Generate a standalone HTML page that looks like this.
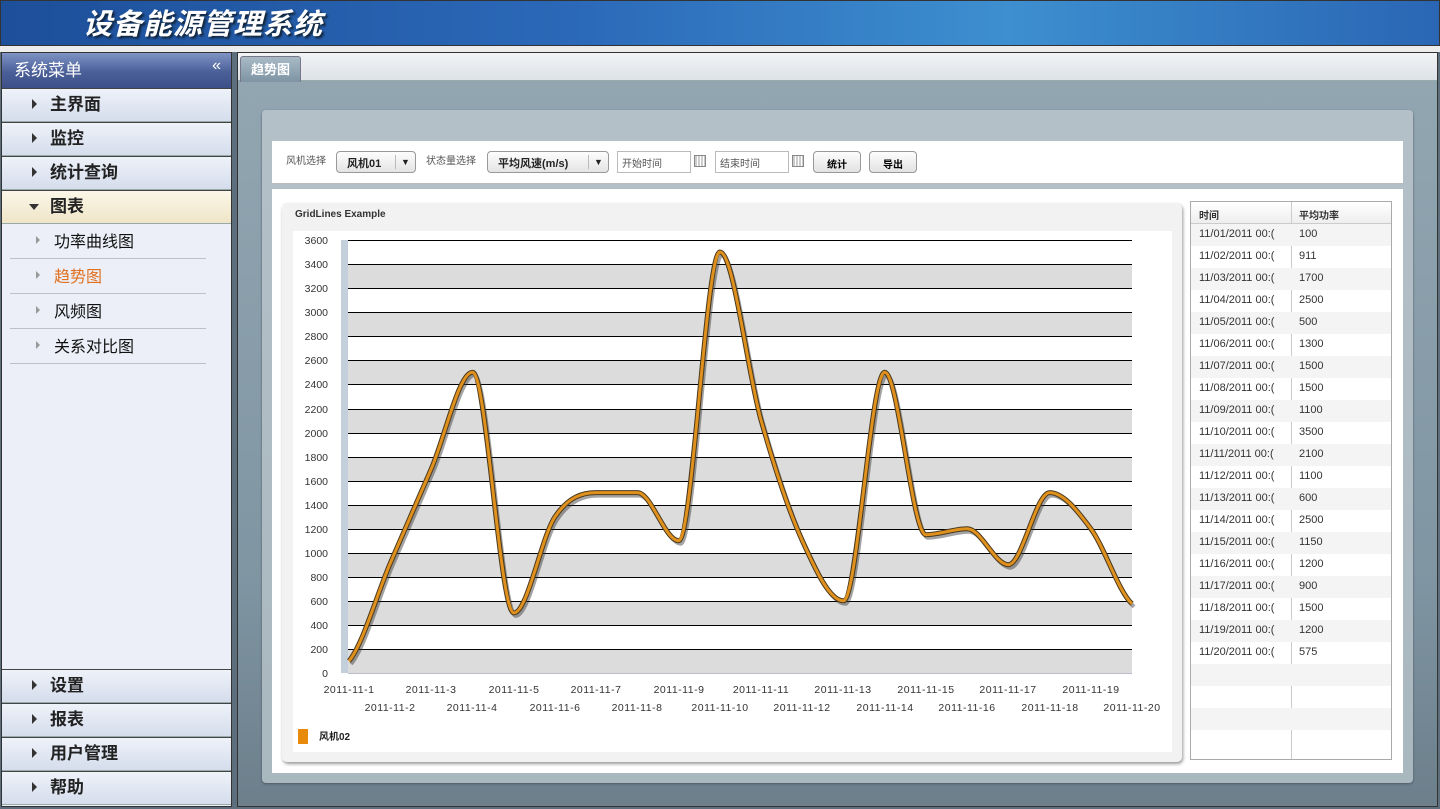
<!DOCTYPE html>
<html><head><meta charset="utf-8"><style>
*{margin:0;padding:0;box-sizing:border-box}
body{width:1440px;height:809px;position:relative;overflow:hidden;background:#5d6f7c;font-family:"Liberation Sans","Noto Sans CJK SC",sans-serif}
.a{position:absolute}
#hdr{left:0;top:0;width:1440px;height:46px;background:linear-gradient(90deg,#1d4f9a 0%,#2b69b8 40%,#3d8fd0 70%,#2a66b4 100%);border:1px solid #333}
#hdr span{position:absolute;left:82px;top:0px;font-size:29px;font-weight:bold;font-style:italic;color:#fff;text-shadow:2px 2px 2px #123;letter-spacing:1px}
#strip{left:0;top:46px;width:1440px;height:6px;background:#ececec}
#side{left:1px;top:52px;width:231px;height:755px;background:#eceff7;border:1px solid #333}
.sh{left:0;top:0;width:229px;height:35px;background:linear-gradient(#7f93c4,#4a5f98 55%,#3e5088);color:#fff;font-size:17px;padding:3px 0 0 12px}
.sh b{position:absolute;right:10px;top:4px;font-weight:normal;font-size:16px}
.mi{left:0;width:229px;height:34px;background:linear-gradient(#eef2f9,#d5ddec);border-top:1px solid #444;border-bottom:1px solid #9aa;font-size:17px;font-weight:bold;color:#222;padding:1px 0 0 48px}
.mi:before{content:"";position:absolute;left:30px;top:10px;border-left:5px solid #333;border-top:5px solid transparent;border-bottom:5px solid transparent}
.mi.on{background:linear-gradient(#fbf6e8,#efe5c8)}
.mi.on:before{left:27px;top:13px;border-top:6px solid #333;border-left:5px solid transparent;border-right:5px solid transparent;border-bottom:0}
.si{left:8px;width:196px;height:35px;border-bottom:1px solid #bcc1cc;font-size:16px;color:#111;padding:4px 0 0 44px}
.si:before{content:"";position:absolute;left:26px;top:12px;border-left:4px solid #999;border-top:4px solid transparent;border-bottom:4px solid transparent}
#main{left:237px;top:52px;width:1201px;height:755px;border:1px solid #333;background:linear-gradient(#93a7b2,#7f95a2 70%,#6c7f8b)}
#tabbar{left:0;top:0;width:1199px;height:28px;background:linear-gradient(#f2f4f6,#dde2e7);border-bottom:1px solid #9aa}
#tab{left:2px;top:3px;width:61px;height:26px;background:linear-gradient(#a9bac6,#7e94a3);border:1px solid #778;border-bottom:0;border-radius:3px 3px 0 0;color:#fff;font-weight:bold;font-size:13px;padding:2px 0 0 10px}
#panel{left:262px;top:110px;width:1151px;height:673px;background:linear-gradient(#b4c0c7,#a9b7bf);border-radius:4px;box-shadow:0 1px 2px #556}
#tool{left:272px;top:141px;width:1131px;height:43px;background:#fff;border-bottom:1px solid #bbb}
#cont{left:272px;top:189px;width:1131px;height:584px;background:#fff}
.lbl{font-size:10px;color:#555;top:154px}
.cb{top:151px;height:22px;border:1px solid #999;border-radius:4px;background:linear-gradient(#fdfdfd,#e4e4e4);font-size:11px;font-weight:bold;padding:3px 0 0 10px;color:#222}
.cb i{position:absolute;right:0;top:3px;width:20px;height:14px;border-left:1px solid #bbb;font-style:normal;font-size:9px;text-align:center;line-height:14px}
.tx{top:151px;width:74px;height:22px;border:1px solid #bbb;font-size:10px;color:#555;padding:3px 0 0 4px;background:#fff}
.cal{top:155px;width:12px;height:12px;border:1px solid #888;background:repeating-linear-gradient(90deg,#ccc 0 2px,#fff 2px 3px);}
.bt{top:151px;width:48px;height:22px;border:1px solid #999;border-radius:4px;background:linear-gradient(#fdfdfd,#e2e2e2);font-size:10px;font-weight:bold;text-align:center;padding-top:4px}
#card{left:282px;top:203px;width:900px;height:559px;background:#f2f2f2;border-radius:5px;box-shadow:1px 2px 3px #999}
#inner{left:293px;top:231px;width:879px;height:521px;background:#fff}
#tbl{left:1190px;top:201px;width:202px;height:559px;border:1px solid #aaa;background:#fff;font-size:11px;color:#333}
#tbl .r{position:absolute;left:0;width:200px;height:22px}
#tbl .r span{position:absolute;top:4px}
</style></head><body>
<div id="hdr" class="a"><span>设备能源管理系统</span></div>
<div id="strip" class="a"></div>
<div id="side" class="a">
<div class="a sh">系统菜单<b>«</b></div>
<div class="a mi" style="top:35px">主界面</div>
<div class="a mi" style="top:69px">监控</div>
<div class="a mi" style="top:103px">统计查询</div>
<div class="a mi on" style="top:137px">图表</div>
<div class="a si" style="top:171px">功率曲线图</div>
<div class="a si" style="top:206px;color:#e07020">趋势图</div>
<div class="a si" style="top:241px">风频图</div>
<div class="a si" style="top:276px">关系对比图</div>
<div class="a mi" style="top:616px">设置</div>
<div class="a mi" style="top:650px">报表</div>
<div class="a mi" style="top:684px">用户管理</div>
<div class="a mi" style="top:718px">帮助</div>
</div>
<div id="main" class="a"><div id="tabbar" class="a"></div><div id="tab" class="a">趋势图</div></div>
<div id="panel" class="a"></div>
<div id="tool" class="a"></div>
<div id="cont" class="a"></div>
<div class="a lbl" style="left:286px;top:152px">风机选择</div>
<div class="a cb" style="left:336px;width:80px">风机01<i>▼</i></div>
<div class="a lbl" style="left:426px;top:152px">状态量选择</div>
<div class="a cb" style="left:487px;width:122px">平均风速(m/s)<i>▼</i></div>
<div class="a tx" style="left:617px">开始时间</div><div class="a cal" style="left:694px"></div>
<div class="a tx" style="left:715px">结束时间</div><div class="a cal" style="left:792px"></div>
<div class="a bt" style="left:813px">统计</div>
<div class="a bt" style="left:869px">导出</div>
<div id="card" class="a"></div>
<div class="a" style="left:295px;top:209px;font-size:10px;font-weight:bold;color:#333">GridLines Example</div>
<div id="inner" class="a"></div>
<svg class="a" style="left:0;top:0" width="1440" height="809">
<g fill="#dcdcdc">
<rect x="348" y="649" width="784" height="24"/><rect x="348" y="601" width="784" height="24"/><rect x="348" y="553" width="784" height="24"/><rect x="348" y="505" width="784" height="24"/><rect x="348" y="457" width="784" height="24"/><rect x="348" y="409" width="784" height="24"/><rect x="348" y="360" width="784" height="24"/><rect x="348" y="312" width="784" height="24"/><rect x="348" y="264" width="784" height="24"/>
</g>
<rect x="341" y="240" width="7" height="433" fill="#c3cfdb"/>
<g stroke="#000" stroke-width="1" transform="translate(0,0.5)">
<path d="M348 649H1132M348 625H1132M348 601H1132M348 577H1132M348 553H1132M348 529H1132M348 505H1132M348 481H1132M348 457H1132M348 433H1132M348 409H1132M348 384H1132M348 360H1132M348 336H1132M348 312H1132M348 288H1132M348 264H1132M348 240H1132"/>
</g>
<path d="M348 673.5H1132" stroke="#bbc" />
<g font-family="Liberation Sans,sans-serif" font-size="10.5" fill="#333" text-anchor="end">
<text x="328" y="677">0</text><text x="328" y="653">200</text><text x="328" y="629">400</text><text x="328" y="605">600</text><text x="328" y="581">800</text><text x="328" y="557">1000</text><text x="328" y="533">1200</text><text x="328" y="509">1400</text><text x="328" y="485">1600</text><text x="328" y="461">1800</text><text x="328" y="437">2000</text><text x="328" y="413">2200</text><text x="328" y="388">2400</text><text x="328" y="364">2600</text><text x="328" y="340">2800</text><text x="328" y="316">3000</text><text x="328" y="292">3200</text><text x="328" y="268">3400</text><text x="328" y="244">3600</text>
</g>
<g font-family="Liberation Sans,sans-serif" font-size="10.5" fill="#333" text-anchor="middle" letter-spacing="0.5">
<text x="349" y="693">2011-11-1</text><text x="431" y="693">2011-11-3</text><text x="514" y="693">2011-11-5</text><text x="596" y="693">2011-11-7</text><text x="679" y="693">2011-11-9</text><text x="761" y="693">2011-11-11</text><text x="843" y="693">2011-11-13</text><text x="926" y="693">2011-11-15</text><text x="1008" y="693">2011-11-17</text><text x="1091" y="693">2011-11-19</text>
<text x="390" y="711">2011-11-2</text><text x="472" y="711">2011-11-4</text><text x="555" y="711">2011-11-6</text><text x="637" y="711">2011-11-8</text><text x="720" y="711">2011-11-10</text><text x="802" y="711">2011-11-12</text><text x="885" y="711">2011-11-14</text><text x="967" y="711">2011-11-16</text><text x="1050" y="711">2011-11-18</text><text x="1132" y="711">2011-11-20</text>
</g>
<defs><path id="c" d="M349,661 C362.7,644.7 376.5,595.5 390.2,563.4 C403.9,531.3 417.7,500.4 431.4,468.5 C445.1,436.6 458.9,372.3 472.6,372.3 C486.3,372.3 500.1,612.9 513.8,612.9 C527.5,612.9 541.4,536.7 555.1,516.6 C568.8,496.5 582.6,492.6 596.3,492.6 C610,492.6 623.8,492.6 637.5,492.6 C651.2,492.6 665,540.7 678.7,540.7 C692.4,540.7 706.2,252 719.9,252 C733.6,252 747.4,372.3 761.1,420.4 C774.8,468.5 788.6,510.6 802.3,540.7 C816,570.8 829.8,600.8 843.5,600.8 C857.2,600.8 871,372.3 884.7,372.3 C898.4,372.3 912.2,534.7 925.9,534.7 C939.6,534.7 953.5,528.7 967.2,528.7 C980.9,528.7 994.7,564.7 1008.4,564.7 C1022.1,564.7 1035.9,492.6 1049.6,492.6 C1063.3,492.6 1077.1,510.2 1090.8,528.7 C1104.5,547.2 1118.3,591.3 1132,603.8" fill="none"/></defs>
<use href="#c" transform="translate(2,3)" stroke="#333" stroke-width="4" opacity="0.45"/>
<use href="#c" stroke="#4a3a20" stroke-width="5"/>
<use href="#c" stroke="#e0901c" stroke-width="3"/>
<rect x="298" y="729" width="10" height="15" fill="#e88a0c"/>
<text x="319" y="740" font-size="10" font-weight="bold" fill="#222" font-family="Liberation Sans,Noto Sans CJK SC,sans-serif">风机02</text>
</svg>
<div id="tbl" class="a">
<div class="r" style="top:0;height:22px;background:linear-gradient(#fff,#eee);border-bottom:1px solid #ccc"><span style="left:8px;font-size:10px;font-weight:bold;top:5px">时间</span><span style="left:108px;font-size:10px;font-weight:bold;top:5px">平均功率</span></div>
<div class="a" style="left:100px;top:0;width:1px;height:557px;background:#ccc"></div>
<div class="r" style="top:22px;background:#f4f4f4"><span style="left:8px">11/01/2011 00:(</span><span style="left:108px">100</span></div>
<div class="r" style="top:44px"><span style="left:8px">11/02/2011 00:(</span><span style="left:108px">911</span></div>
<div class="r" style="top:66px;background:#f4f4f4"><span style="left:8px">11/03/2011 00:(</span><span style="left:108px">1700</span></div>
<div class="r" style="top:88px"><span style="left:8px">11/04/2011 00:(</span><span style="left:108px">2500</span></div>
<div class="r" style="top:110px;background:#f4f4f4"><span style="left:8px">11/05/2011 00:(</span><span style="left:108px">500</span></div>
<div class="r" style="top:132px"><span style="left:8px">11/06/2011 00:(</span><span style="left:108px">1300</span></div>
<div class="r" style="top:154px;background:#f4f4f4"><span style="left:8px">11/07/2011 00:(</span><span style="left:108px">1500</span></div>
<div class="r" style="top:176px"><span style="left:8px">11/08/2011 00:(</span><span style="left:108px">1500</span></div>
<div class="r" style="top:198px;background:#f4f4f4"><span style="left:8px">11/09/2011 00:(</span><span style="left:108px">1100</span></div>
<div class="r" style="top:220px"><span style="left:8px">11/10/2011 00:(</span><span style="left:108px">3500</span></div>
<div class="r" style="top:242px;background:#f4f4f4"><span style="left:8px">11/11/2011 00:(</span><span style="left:108px">2100</span></div>
<div class="r" style="top:264px"><span style="left:8px">11/12/2011 00:(</span><span style="left:108px">1100</span></div>
<div class="r" style="top:286px;background:#f4f4f4"><span style="left:8px">11/13/2011 00:(</span><span style="left:108px">600</span></div>
<div class="r" style="top:308px"><span style="left:8px">11/14/2011 00:(</span><span style="left:108px">2500</span></div>
<div class="r" style="top:330px;background:#f4f4f4"><span style="left:8px">11/15/2011 00:(</span><span style="left:108px">1150</span></div>
<div class="r" style="top:352px"><span style="left:8px">11/16/2011 00:(</span><span style="left:108px">1200</span></div>
<div class="r" style="top:374px;background:#f4f4f4"><span style="left:8px">11/17/2011 00:(</span><span style="left:108px">900</span></div>
<div class="r" style="top:396px"><span style="left:8px">11/18/2011 00:(</span><span style="left:108px">1500</span></div>
<div class="r" style="top:418px;background:#f4f4f4"><span style="left:8px">11/19/2011 00:(</span><span style="left:108px">1200</span></div>
<div class="r" style="top:440px"><span style="left:8px">11/20/2011 00:(</span><span style="left:108px">575</span></div>
<div class="r" style="top:462px;background:#f4f4f4"></div>
<div class="r" style="top:506px;background:#f4f4f4"></div>
</div>
</body></html>
